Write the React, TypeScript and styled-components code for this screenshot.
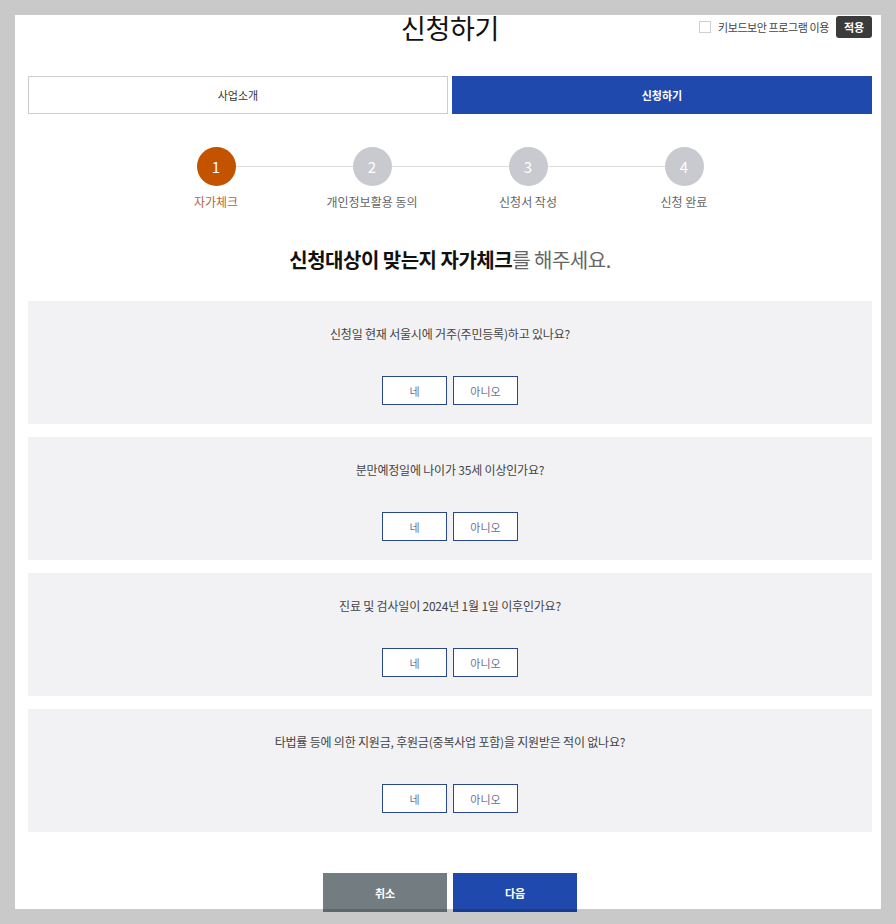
import React from "react";
import styled, { createGlobalStyle } from "styled-components";

const Global = createGlobalStyle`
  html, body { margin: 0; padding: 0; background: #c9c9c9; }
  body { font-family: "Noto Sans CJK KR", "Noto Sans", sans-serif; color: #333; }
  * { box-sizing: border-box; }
`;

const Page = styled.div`
  margin: 15px;
  width: 866px;
  height: 894px;
  background: #fff;
  padding: 0 9px 0 13px;
`;

const Header = styled.header`
  display: grid;
  grid-template-columns: 1fr auto 1fr;
  align-items: start;
  height: 61px;
`;

const Title = styled.h1`
  grid-column: 2;
  margin: -4px 0 0;
  font-size: 27px;
  line-height: 34px;
  font-weight: 400;
  color: #111;
  letter-spacing: -0.3px;
`;

const KeyOption = styled.div`
  grid-column: 3;
  justify-self: end;
  display: flex;
  align-items: center;
  gap: 7px;
  margin-top: 1px;
  font-size: 11px;
  color: #444;
  letter-spacing: -0.4px;
`;

const Check = styled.span`
  width: 12px;
  height: 12px;
  border: 1px solid #cfcfcf;
  background: #fff;
`;

const ApplyButton = styled.button`
  height: 22px;
  width: 36px;
  padding: 0;
  border: 0;
  border-radius: 3px;
  background: #3b3b3b;
  color: #fff;
  font: inherit;
  font-size: 11px;
  font-weight: 700;
`;

const Tabs = styled.nav`
  display: grid;
  grid-template-columns: 1fr 1fr;
  gap: 4px;
`;

const Tab = styled.div<{ $active?: boolean }>`
  height: 38px;
  display: flex;
  align-items: center;
  justify-content: center;
  font-size: 11px;
  font-weight: ${(p) => (p.$active ? 700 : 400)};
  color: ${(p) => (p.$active ? "#fff" : "#333")};
  background: ${(p) => (p.$active ? "#2049ae" : "#fff")};
  border: 1px solid ${(p) => (p.$active ? "#2049ae" : "#cccccc")};
`;

const Steps = styled.ol`
  position: relative;
  display: grid;
  grid-template-columns: repeat(4, 156px);
  justify-content: center;
  margin: 33px 0 0;
  padding: 0;
  list-style: none;
`;

const StepLine = styled.span`
  position: absolute;
  top: 19px;
  left: calc(50% - 234px);
  width: 468px;
  height: 1px;
  background: #dedede;
`;

const Step = styled.li`
  position: relative;
  display: flex;
  flex-direction: column;
  align-items: center;
`;

const Circle = styled.span<{ $active?: boolean }>`
  width: 39px;
  height: 39px;
  border-radius: 50%;
  display: flex;
  align-items: center;
  justify-content: center;
  background: ${(p) => (p.$active ? "#c45300" : "#c8cacf")};
  color: #fff;
  font-size: 15px;
`;

const StepLabel = styled.span<{ $active?: boolean }>`
  margin-top: 7px;
  font-size: 12px;
  line-height: 18px;
  color: ${(p) => (p.$active ? "#b3633e" : "#666")};
`;

const Lead = styled.h2`
  margin: 35px 0 0;
  text-align: center;
  font-size: 20px;
  line-height: 28px;
  font-weight: 700;
  color: #111;
  letter-spacing: -0.5px;
`;

const LeadRest = styled.span`
  font-weight: 400;
  color: #666;
`;

const Questions = styled.div`
  display: flex;
  flex-direction: column;
  gap: 13px;
  margin-top: 27px;
`;

const Card = styled.section`
  height: 123px;
  background: #f2f2f4;
  display: flex;
  flex-direction: column;
  align-items: center;
  padding-top: 24px;
`;

const Question = styled.p`
  margin: 0;
  font-size: 12px;
  line-height: 18px;
  color: #444;
  letter-spacing: -0.2px;
`;

const Answers = styled.div`
  display: flex;
  gap: 6px;
  margin-top: 33px;
`;

const Answer = styled.button`
  width: 65px;
  height: 29px;
  border: 1px solid #28478d;
  background: #fff;
  color: #6c7090;
  font: inherit;
  font-size: 11px;
`;

const Footer = styled.div`
  display: flex;
  justify-content: center;
  gap: 6px;
  margin-top: 41px;
`;

const FooterButton = styled.button<{ $primary?: boolean }>`
  width: 124px;
  height: 39px;
  border: 0;
  background: ${(p) => (p.$primary ? "#2049ae" : "#737c80")};
  color: #fff;
  font: inherit;
  font-size: 11px;
  font-weight: 700;
  box-shadow: inset 0 -3px 0 rgba(0, 0, 0, 0.17);
`;

const steps = ["자가체크", "개인정보활용 동의", "신청서 작성", "신청 완료"];
const questions = [
  "신청일 현재 서울시에 거주(주민등록)하고 있나요?",
  "분만예정일에 나이가 35세 이상인가요?",
  "진료 및 검사일이 2024년 1월 1일 이후인가요?",
  "타법률 등에 의한 지원금, 후원금(중복사업 포함)을 지원받은 적이 없나요?",
];

export default function App() {
  return (
    <>
      <Global />
      <Page>
        <Header>
          <Title>신청하기</Title>
          <KeyOption>
            <Check />
            <span>키보드보안 프로그램 이용</span>
            <ApplyButton>적용</ApplyButton>
          </KeyOption>
        </Header>
        <Tabs>
          <Tab>사업소개</Tab>
          <Tab $active>신청하기</Tab>
        </Tabs>
        <Steps>
          <StepLine />
          {steps.map((s, i) => (
            <Step key={s}>
              <Circle $active={i === 0}>{i + 1}</Circle>
              <StepLabel $active={i === 0}>{s}</StepLabel>
            </Step>
          ))}
        </Steps>
        <Lead>
          신청대상이 맞는지 자가체크<LeadRest>를 해주세요.</LeadRest>
        </Lead>
        <Questions>
          {questions.map((q) => (
            <Card key={q}>
              <Question>{q}</Question>
              <Answers>
                <Answer>네</Answer>
                <Answer>아니오</Answer>
              </Answers>
            </Card>
          ))}
        </Questions>
        <Footer>
          <FooterButton>취소</FooterButton>
          <FooterButton $primary>다음</FooterButton>
        </Footer>
      </Page>
    </>
  );
}
